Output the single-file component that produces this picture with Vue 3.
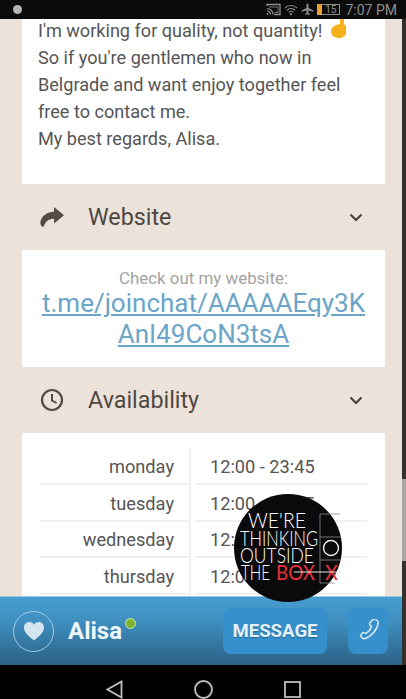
<template>
  <div class="screen">
    <div class="statusbar">
      <span class="dot"></span>
      <div class="status-right">
        <svg width="15" height="13" viewBox="0 0 15 13">
          <path d="M1 3V1.500h13v10H8" fill="none" stroke="#8d8d8d" stroke-width="1.300" />
          <path d="M3 4h9v5.500H8.500" fill="none" stroke="#8d8d8d" stroke-width="0.800" />
          <path d="M1 5.500a6 6 0 0 1 6 6M1 8a3.500 3.500 0 0 1 3.500 3.500" fill="none" stroke="#8d8d8d" stroke-width="1.200" />
          <circle cx="1.600" cy="11" r="1" fill="#8d8d8d" />
        </svg>
        <svg width="14" height="13" viewBox="0 0 15 13">
          <path d="M1 5a9 9 0 0 1 13 0M3 7.500a6 6 0 0 1 9 0M5 9.700a3 3 0 0 1 5 0" fill="none" stroke="#8d8d8d" stroke-width="1.200" />
          <circle cx="7.500" cy="11.500" r="1.200" fill="#8d8d8d" />
        </svg>
        <svg width="13" height="13" viewBox="0 0 13 13">
          <path d="M6.500 0.500c.6 0 1 .7 1 1.600v2.800l5 2.700v1.200l-5-1.400v2.600l1.400 1v1L6.500 11.200l-2.400.8v-1l1.400-1V7.400l-5 1.400V7.600l5-2.700V2.100c0-.9.4-1.600 1-1.600z" fill="#8d8d8d" />
        </svg>
        <div class="battery">
          <span class="battery-fill"></span>
          <span class="battery-num">15</span>
        </div>
        <span class="clock">7:07 PM</span>
      </div>
    </div>

    <div class="main">
      <div class="column">
        <div class="content">
          <div class="card bio">
            <p>I'm working for quality, not quantity!
              <svg class="finger" width="17" height="22" viewBox="0 0 17 22">
                <path d="M10 0h3.500l.8 8.500L16 10v6.500c0 3.200-3 5.500-7 5.500s-8-2-8-6.500C1 11.500 4 9 10 8z" fill="#f4b11c" />
              </svg>
            </p>
            <p>So if you're gentlemen who now in</p>
            <p>Belgrade and want enjoy together feel</p>
            <p>free to contact me.</p>
            <p>My best regards, Alisa.</p>
          </div>

          <div class="section-head">
            <svg width="24" height="20" viewBox="0 0 24 20">
              <path d="M14 0l10 8.200-10 8.300v-4.700c-5 0-8 2-10.500 8C1 19.800 0 17 .5 14.500 2 8.500 7.500 5 14 4.800z" fill="#514a45" />
            </svg>
            <span class="section-title">Website</span>
            <svg class="chev" width="14" height="9" viewBox="0 0 14 9">
              <path d="M1.500 1.500L7 7l5.500-5.500" fill="none" stroke="#4a433e" stroke-width="2.200" />
            </svg>
          </div>

          <div class="card website">
            <div class="check">Check out my website:</div>
            <a class="link">t.me/joinchat/AAAAAEqy3K<br />AnI49CoN3tsA</a>
          </div>

          <div class="section-head">
            <svg width="24" height="24" viewBox="0 0 24 24">
              <circle cx="12" cy="12" r="10" fill="none" stroke="#514a45" stroke-width="2.200" />
              <path d="M12 6v6.500l4.500 2.500" fill="none" stroke="#514a45" stroke-width="2" />
            </svg>
            <span class="section-title">Availability</span>
            <svg class="chev" width="14" height="9" viewBox="0 0 14 9">
              <path d="M1.500 1.500L7 7l5.500-5.500" fill="none" stroke="#4a433e" stroke-width="2.200" />
            </svg>
          </div>

          <div class="card hours">
            <div v-for="row in hours" :key="row.day" class="hour-row">
              <span class="day">{{ row.day }}</span>
              <span class="time">{{ row.time }}</span>
            </div>
          </div>
        </div>

        <div class="bottombar">
          <button class="heart-btn">
            <svg width="22" height="20" viewBox="0 0 22 20">
              <path d="M11 19.500C4 14 1 10.800 1 6.500 1 3.200 3.500 1 6.200 1 8.200 1 10 2 11 3.800 12 2 13.800 1 15.800 1 18.500 1 21 3.200 21 6.500 21 10.800 18 14 11 19.500z" fill="#d4e5f0" />
            </svg>
          </button>
          <span class="name">Alisa</span>
          <span class="online"></span>
          <button class="msg-btn">MESSAGE</button>
          <button class="call-btn">
            <svg width="24" height="24" viewBox="0 0 24 24">
              <path d="M16.500 1.500c-.6 0-1 .3-1.400.8l-1.300 1.700c-.4.500-.3 1.200.1 1.700l1.500 1.700c-.5 2-2.800 5.200-5.300 7l-2-.8c-.6-.2-1.200-.1-1.600.4l-1.600 1.900c-.4.500-.4 1.100 0 1.600l1.400 1.500c.6.700 1.400.9 2.300.7 6.500-1.700 13-9.300 13.600-15.800.1-1-.3-1.800-1.100-2.300l-2.800-1.900c-.3-.1-.5-.2-.8-.2z" fill="none" stroke="#d9eaf5" stroke-width="1.500" />
            </svg>
          </button>
        </div>
      </div>
      <div class="edge">
        <div class="thumb"></div>
      </div>

      <svg class="logo" width="108" height="108" viewBox="0 0 108 108">
        <circle cx="54" cy="54" r="54" fill="#0a0a0c" />
        <g class="logo-text" fill="#fff">
          <text x="14" y="34" font-size="22" textLength="58" lengthAdjust="spacingAndGlyphs">WE'RE</text>
          <text x="6" y="52" font-size="22" textLength="78" lengthAdjust="spacingAndGlyphs">THINKING</text>
          <text x="6" y="69" font-size="22" textLength="74" lengthAdjust="spacingAndGlyphs">OUTSIDE</text>
          <text x="7" y="86" font-size="22" textLength="29" lengthAdjust="spacingAndGlyphs">THE</text>
          <text class="red" x="42" y="86" font-size="22" textLength="39" lengthAdjust="spacingAndGlyphs">BOX</text>
          <text class="red" x="91" y="86" font-size="22" textLength="13" lengthAdjust="spacingAndGlyphs">X</text>
        </g>
        <path d="M86 20h20M86 43h21M86 66h21M86 89h15M86 20v69" fill="none" stroke="#8a8a8a" stroke-width="0.800" />
        <path d="M60 78h48" stroke="#e8e8e8" stroke-width="1" />
        <circle cx="97" cy="54" r="7.500" fill="none" stroke="#f0f0f0" stroke-width="1.400" />
      </svg>
    </div>

    <div class="navbar">
      <svg width="17" height="19" viewBox="0 0 17 19">
        <path d="M15.500 1.500v16L1.500 9.500z" fill="none" stroke="#bdbdbd" stroke-width="1.800" />
      </svg>
      <svg width="19" height="19" viewBox="0 0 19 19">
        <circle cx="9.500" cy="9.500" r="8.500" fill="none" stroke="#bdbdbd" stroke-width="1.800" />
      </svg>
      <svg width="17" height="17" viewBox="0 0 17 17">
        <rect x="1" y="1" width="15" height="15" fill="none" stroke="#bdbdbd" stroke-width="1.800" />
      </svg>
    </div>
  </div>
</template>

<script setup>
const hours = [
  { day: 'monday', time: '12:00 - 23:45' },
  { day: 'tuesday', time: '12:00 - 23:45' },
  { day: 'wednesday', time: '12:00 - 23:45' },
  { day: 'thursday', time: '12:00 - 23:45' }
]
</script>

<style>
html,
body {
  margin: 0;
  background: #000;
}
</style>

<style scoped>
.screen {
  width: 406px;
  height: 699px;
  display: flex;
  flex-direction: column;
  overflow: hidden;
  font-family: Roboto, "Liberation Sans", sans-serif;
  color: #555;
}

.statusbar {
  height: 19px;
  flex: none;
  background: #0b0b0b;
  display: flex;
  align-items: center;
  justify-content: space-between;
  padding: 0 9px 0 13px;
  color: #8d8d8d;
}

.dot {
  width: 9px;
  height: 9px;
  border-radius: 50%;
  background: #b5b5b5;
}

.status-right {
  display: flex;
  align-items: center;
  gap: 3px;
}

.battery {
  width: 22px;
  height: 11px;
  margin-left: 1px;
  border: 1px solid #8d8d8d;
  box-sizing: border-box;
  position: relative;
  display: flex;
  justify-content: flex-end;
  align-items: center;
  padding-right: 3px;
}

.battery-fill {
  position: absolute;
  left: -2px;
  top: -1px;
  width: 5px;
  height: 11px;
  background: #eaa32c;
}

.battery-num {
  font-size: 10px;
  line-height: 1;
}

.clock {
  font-size: 14px;
  margin-left: 2px;
}

.main {
  flex: 1;
  min-height: 0;
  display: flex;
  position: relative;
}

.column {
  flex: 1;
  min-width: 0;
  display: flex;
  flex-direction: column;
}

.content {
  flex: 1;
  min-height: 0;
  padding: 0 17px 0 22px;
  overflow: hidden;
  background: #ece2da;
}

.edge {
  width: 4px;
  flex: none;
  background: #34302d;
  padding-top: 460px;
  box-sizing: border-box;
}

.thumb {
  height: 82px;
  background: #aaa7a4;
}

.card {
  background: #fff;
}

.bio {
  height: 165px;
  padding-left: 16px;
  box-sizing: border-box;
  font-size: 18.100px;
  line-height: 27px;
  color: #555;
}

.bio p {
  margin: 0;
  white-space: nowrap;
  position: relative;
  top: -2px;
}

.finger {
  position: absolute;
  left: 292px;
  top: -1px;
}

.section-head {
  height: 66px;
  display: flex;
  align-items: center;
  padding: 0 22px 0 18px;
  color: #4e4843;
}

.section-title {
  flex: 1;
  font-size: 23.300px;
  margin-left: 24px;
}

.website {
  height: 117px;
  padding-top: 18px;
  box-sizing: border-box;
  text-align: center;
}

.check {
  font-size: 16.900px;
  line-height: 20px;
  color: #a3a3a3;
}

.link {
  display: block;
  font-size: 26px;
  line-height: 31px;
  color: #6ba5c8;
  text-decoration: underline;
  text-underline-offset: 2px;
}

.hours {
  height: 200px;
  padding: 15.500px 18px 0;
  box-sizing: border-box;
}

.hour-row {
  height: 36.500px;
  display: grid;
  grid-template-columns: 151px 1fr;
  column-gap: 4px;
  box-sizing: border-box;
  font-size: 18.200px;
  align-items: center;
}

.day,
.time {
  height: 100%;
  display: flex;
  align-items: center;
  box-sizing: border-box;
  padding-top: 2px;
  border-bottom: 2px solid #f0f0f0;
}

.day {
  justify-content: flex-end;
  padding-right: 15px;
  border-right: 2px solid #eeeeee;
}

.time {
  padding-left: 15px;
}

.logo {
  position: absolute;
  left: 234px;
  top: 475px;
}

.logo-text {
  font-family: Lato, Roboto, sans-serif;
  font-weight: 300;
}

.red {
  fill: #e8303c;
  font-weight: 400;
}

.bottombar {
  height: 69px;
  flex: none;
  display: flex;
  align-items: center;
  padding: 0 14px 0 13px;
  background: linear-gradient(#479dd0 0%, #3f8fc0 35%, #2b6285 100%);
  border-top: 1px solid #9cc9e2;
  box-sizing: border-box;
}

.heart-btn {
  width: 41px;
  height: 41px;
  padding: 0;
  border: 1.500px solid #a4cde5;
  border-radius: 50%;
  background: transparent;
  display: flex;
  align-items: center;
  justify-content: center;
}

.name {
  margin-left: 14px;
  font-size: 24px;
  font-weight: 700;
  color: #eef6fb;
}

.online {
  width: 9px;
  height: 9px;
  margin: -16px 0 0 3px;
  border-radius: 50%;
  background: #7cb52d;
  border: 1px solid #cfe6c0;
}

.msg-btn {
  margin-left: auto;
  width: 104px;
  height: 46px;
  border: none;
  border-radius: 8px;
  background: #3590cb;
  color: #e6f2fa;
  font-family: inherit;
  font-size: 18.600px;
  font-weight: 700;
  padding: 0;
  text-shadow: 0 1px 1px rgba(20, 60, 90, 0.5);
}

.call-btn {
  width: 40px;
  height: 46px;
  margin-left: 21px;
  border: none;
  border-radius: 8px;
  background: #3590cb;
  padding: 0;
  display: flex;
  align-items: center;
  justify-content: center;
}

.navbar {
  height: 34px;
  flex: none;
  box-sizing: border-box;
  padding-top: 14px;
  background: #000;
  display: flex;
  align-items: center;
  justify-content: center;
  gap: 71px;
}
</style>
